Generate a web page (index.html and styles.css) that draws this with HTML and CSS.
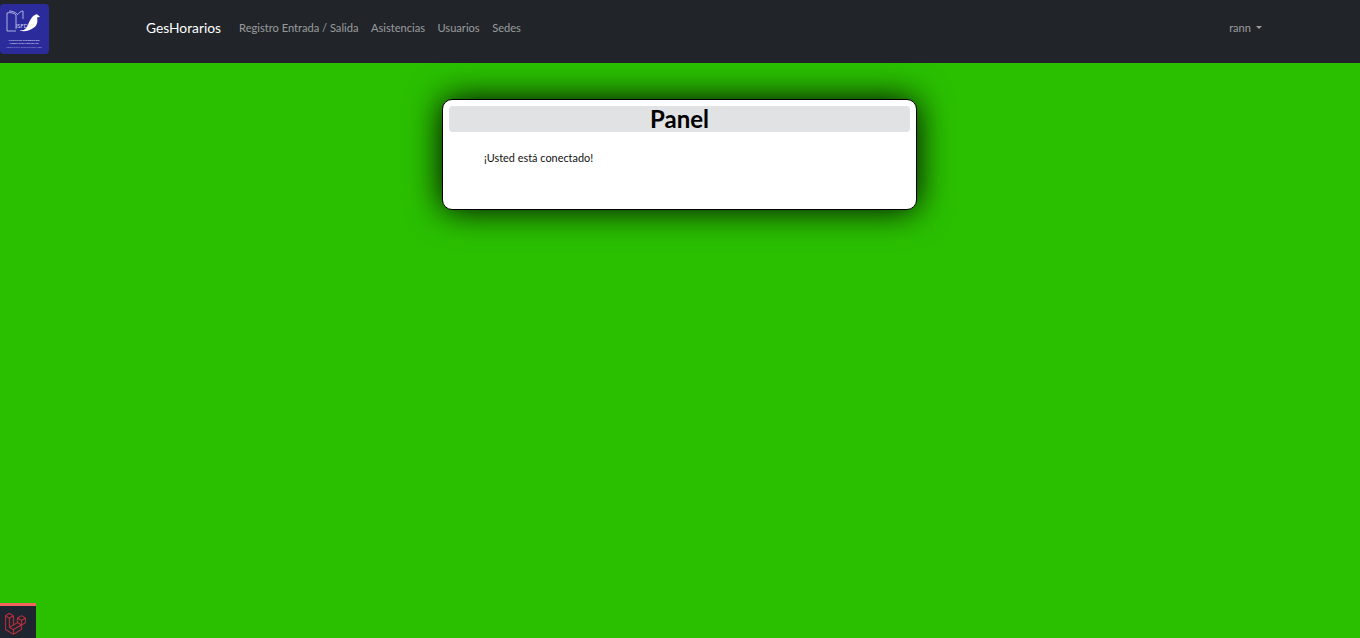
FILE: index.html
```html
<!DOCTYPE html>
<html lang="es">
<head>
    <meta charset="UTF-8">
    <meta name="viewport" content="width=device-width, initial-scale=1.0">
    <title>GesHorarios</title>
    <link rel="stylesheet" href="styles.css">
</head>
<body>

    <nav class="navbar">
        <a class="logo" href="#">
            <svg viewBox="0 0 49 50" width="49" height="50">
                <rect width="49" height="50" rx="4" fill="#2b2b9c"/>
                <path d="M7 9v18h9M7 9c4-1 7 0 9 2v14M9 7c3 0 6 1 8 3M17 11c2-2 4-4 6-4v8" fill="none" stroke="#cdd2f0" stroke-width="0.8"/>
                <path d="M20 26c4 1 6-1 8-5 1-3 4-9 7-10 1-1 2-1 3 0l2 2-3 .5c1 4 0 8-3 10-4 3-10 5-14 3z" fill="#fff"/>
                <text class="logo-isfd" x="16" y="24">ISFD</text>
                <text class="logo-small" x="24" y="36.500">INSTITUTO SUPERIOR DE</text>
                <text class="logo-small" x="24" y="40">FORMACIÓN DOCENTE</text>
                <text class="logo-small logo-dim" x="24" y="43.500">PROVINCIA MONTE GRANDE</text>
            </svg>
        </a>
        <a class="brand" href="#">GesHorarios</a>
        <ul class="nav-links">
            <li><a href="#">Registro Entrada / Salida</a></li>
            <li><a href="#">Asistencias</a></li>
            <li><a href="#">Usuarios</a></li>
            <li><a href="#">Sedes</a></li>
        </ul>
        <a class="user-menu" href="#">rann <span class="caret"></span></a>
    </nav>

    <main class="content">
        <div class="card">
            <h1 class="card-header">Panel</h1>
            <div class="card-body">¡Usted está conectado!</div>
        </div>
    </main>

    <div class="debug-btn">
        <svg viewBox="0 0 50 52" width="21" height="22">
            <path fill="#d9343f" stroke="#d9343f" stroke-width="0.6" d="M49.626 11.564a.809.809 0 0 1 .028.209v10.972a.8.8 0 0 1-.402.694l-9.209 5.302V39.25c0 .286-.152.55-.4.694L20.42 51.01c-.044.025-.092.041-.14.058-.018.006-.035.017-.054.022a.805.805 0 0 1-.41 0c-.022-.006-.042-.018-.063-.026-.044-.016-.09-.03-.132-.054L.402 39.944A.801.801 0 0 1 0 39.25V6.334c0-.072.01-.142.028-.21.006-.023.02-.044.028-.067.015-.042.029-.085.051-.124.015-.026.037-.047.055-.071.023-.032.044-.065.071-.093.023-.023.053-.04.079-.06.029-.024.055-.05.088-.069h.001l9.61-5.533a.802.802 0 0 1 .8 0l9.61 5.533h.002c.032.02.059.045.088.068.026.02.055.038.078.06.028.029.048.062.072.094.017.024.04.045.054.071.023.04.036.082.052.124.008.023.022.044.028.068a.809.809 0 0 1 .028.209v20.559l8.008-4.611v-10.51c0-.07.01-.141.028-.208.007-.024.02-.045.028-.068.016-.042.03-.085.052-.124.015-.026.037-.047.054-.071.024-.032.044-.065.072-.093.023-.023.052-.04.078-.06.03-.024.056-.05.088-.069h.001l9.611-5.533a.801.801 0 0 1 .8 0l9.61 5.533c.034.02.06.045.09.068.025.02.054.038.077.06.028.029.048.062.072.094.018.024.04.045.054.071.023.039.036.082.052.124.009.023.022.044.028.068zm-1.574 10.718v-9.124l-3.363 1.936-4.646 2.675v9.124l8.01-4.611zm-9.61 16.505v-9.13l-4.57 2.61-13.05 7.448v9.216l17.62-10.144zM1.602 7.719v31.068L19.22 48.93v-9.214l-9.204-5.209-.003-.002-.004-.002c-.031-.018-.057-.044-.086-.066-.025-.02-.054-.036-.076-.058l-.002-.003c-.026-.025-.044-.056-.066-.084-.02-.027-.044-.05-.06-.078l-.001-.003c-.018-.03-.029-.066-.042-.1-.013-.03-.03-.058-.038-.09v-.001c-.01-.038-.012-.078-.016-.117-.004-.03-.012-.06-.012-.09v-.002-21.481L4.965 9.654 1.602 7.72zm8.81-5.994L2.405 6.334l8.005 4.609 8.006-4.61-8.006-4.608zm4.164 28.764l4.645-2.674V7.719l-3.363 1.936-4.646 2.675v20.096l3.364-1.937zM39.243 7.164l-8.006 4.609 8.006 4.609 8.005-4.61-8.005-4.608zm-.801 10.605l-4.646-2.675-3.363-1.936v9.124l4.645 2.674 3.364 1.937v-9.124zM20.02 38.33l11.743-6.704 5.87-3.35-8-4.606-9.211 5.303-8.395 4.833 7.993 4.524z"/>
        </svg>
    </div>

</body>
</html>
```

FILE: styles.css
```css
/* Base Styles */
html, body {
    height: 100%;
}
body {
    margin: 0;
    background-color: #2ac000;
    color: #212529;
    font-family: Lato, 'Noto Sans', sans-serif;
    font-size: 12.6px;
    overflow: hidden;
}
a {
    text-decoration: none;
}

/* Navbar */
.navbar {
    display: flex;
    align-items: center;
    box-sizing: border-box;
    height: 63px;
    padding-right: 98px;
    padding-bottom: 9px;
    background-color: #212529;
}
.logo {
    display: flex;
    margin-top: 4px;
    margin-right: 97px;
}
.logo-isfd {
    fill: #d8dcf5;
    font-size: 5.5px;
    font-family: Lato, sans-serif;
}
.logo-small {
    fill: #d5d9f5;
    font-size: 2.6px;
    font-weight: 700;
    text-anchor: middle;
    font-family: Lato, sans-serif;
}
.logo-dim {
    opacity: 0.6;
}
.brand {
    margin-right: 18px;
    color: #fff;
    font-size: 13.8px;
}
.nav-links {
    display: flex;
    gap: 12.5px;
    margin: 0;
    padding: 0;
    list-style: none;
}
.nav-links a {
    color: rgba(255, 255, 255, 0.55);
    font-size: 11.1px;
}
.user-menu {
    display: flex;
    align-items: center;
    gap: 5px;
    margin-left: auto;
    color: rgba(255, 255, 255, 0.55);
    font-size: 11.1px;
}
.caret {
    width: 0;
    height: 0;
    border-top: 3.5px solid rgba(255, 255, 255, 0.55);
    border-left: 3.5px solid transparent;
    border-right: 3.5px solid transparent;
}

/* Card */
.content {
    display: flex;
    justify-content: center;
    padding-top: 36px;
    padding-right: 1px;
}
.card {
    width: 475px;
    height: 111px;
    box-sizing: border-box;
    padding: 6px;
    background: #fff;
    border: 1px solid #000;
    border-radius: 10px;
    box-shadow: 0 0 34px #000;
}
.card-header {
    height: 26px;
    margin: 0;
    background-color: #e1e2e4;
    border-radius: 4px;
    color: #000;
    font-size: 24px;
    font-weight: 700;
    line-height: 25px;
    text-align: center;
}
.card-body {
    padding: 19px 35px;
    color: #111;
    font-size: 10.9px;
}

/* Debug bar button */
.debug-btn {
    position: fixed;
    left: 0;
    bottom: 0;
    display: flex;
    justify-content: center;
    box-sizing: border-box;
    width: 36px;
    height: 35px;
    padding-top: 7px;
    padding-right: 6px;
    background-color: #1e2430;
    border-top: 3px solid #f4645f;
}
```
